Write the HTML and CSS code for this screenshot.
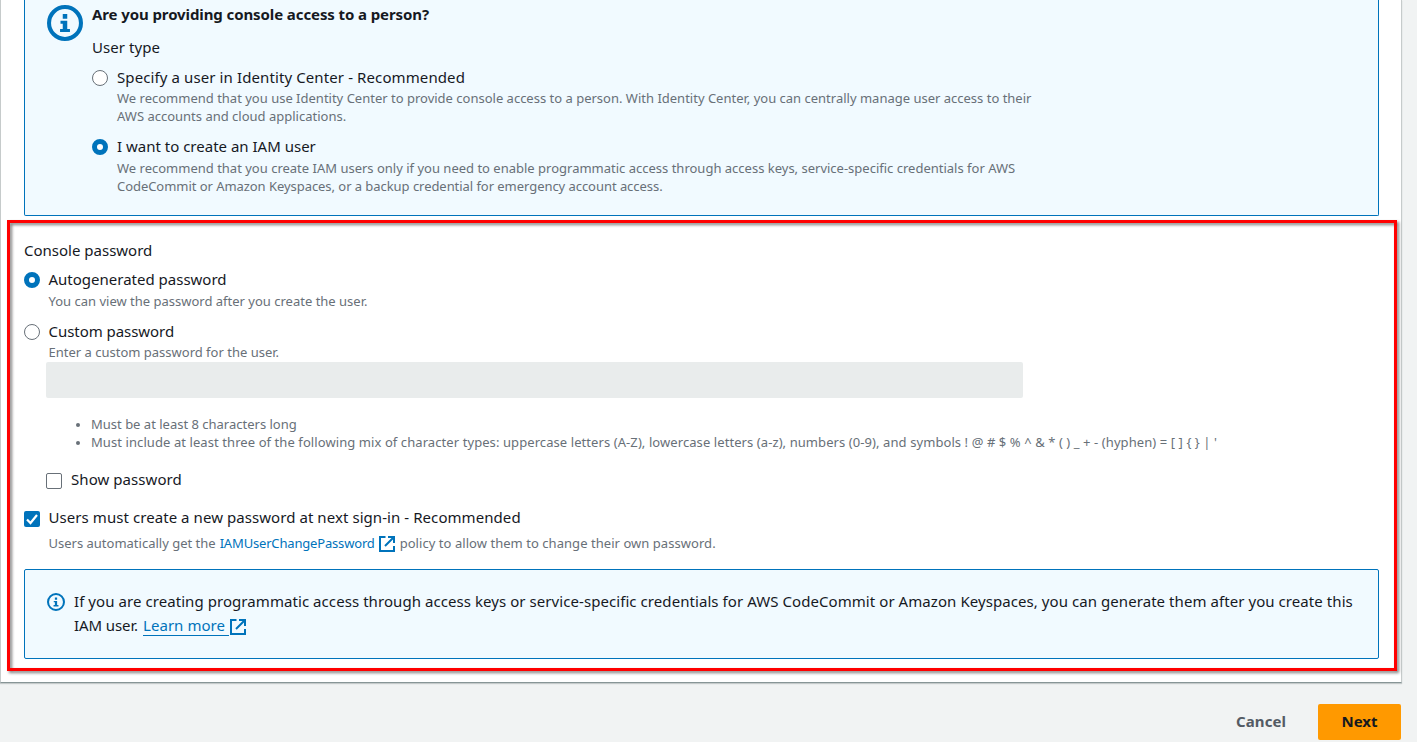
FILE: index.html
```html
<!DOCTYPE html>
<html lang="en">
<head>
<meta charset="utf-8">
<title>Create user</title>
<link rel="stylesheet" href="styles.css">
</head>
<body>
<svg class="defs" aria-hidden="true">
<symbol id="info" viewBox="0 0 16 16"><circle cx="8" cy="8" r="7.100" fill="none" stroke="currentColor" stroke-width="1.800"/><path fill="currentColor" d="M7 4h2v2.100H7zM6 7h3v3.700h1.200V12H5.800v-1.300H7V8.300H6z"/></symbol>
<symbol id="ext" viewBox="0 0 16 16"><path d="M6.500 1H1v14h14v-5M9 1h6v6M15 1 6 10" fill="none" stroke="currentColor" stroke-width="2"/></symbol>
<symbol id="tick" viewBox="0 0 16 16"><path d="M3 8.500 6.500 12 13 4" fill="none" stroke="#fff" stroke-width="2.200"/></symbol>
</svg>
<main class="panel">
<section class="box access">
<svg class="big-info"><use href="#info"/></svg>
<div class="access-body">
<h2 class="title"><span>Are you providing console access to a person?</span></h2>
<div class="label"><span class="loose">User type</span></div>
<div class="option first"><i class="radio"></i><div><div class="label"><span class="looser">Specify a user in Identity Center - Recommended</span></div>
<p class="hint"><span>We recommend that you use Identity Center to provide console access to a person. With Identity Center, you can centrally manage user access to their</span><br><span>AWS accounts and cloud applications.</span></p></div></div>
<div class="option"><i class="radio on"></i><div><div class="label"><span>I want to create an IAM user</span></div>
<p class="hint low"><span>We recommend that you create IAM users only if you need to enable programmatic access through access keys, service-specific credentials for AWS</span><br><span class="tight">CodeCommit or Amazon Keyspaces, or a backup credential for emergency account access.</span></p></div></div>
</div>
</section>
<section class="password">
<div class="label"><span>Console password</span></div>
<div class="option auto"><i class="radio on"></i><div><div class="label"><span>Autogenerated password</span></div><p class="hint low"><span>You can view the password after you create the user.</span></p></div></div>
<div class="option custom"><i class="radio"></i><div><div class="label"><span class="tight">Custom password</span></div><p class="hint"><span>Enter a custom password for the user.</span></p></div></div>
<div class="custom-fields">
<div class="input"></div>
<ul class="rules"><li><span>Must be at least 8 characters long</span></li><li><span>Must include at least three of the following mix of character types: uppercase letters (A-Z), lowercase letters (a-z), numbers (0-9), and </span><span class="symbols">symbols ! @ # $ % ^ &amp; * ( ) _ + - (hyphen) = [ ] { } | '</span></li></ul>
<div class="option"><i class="check"></i><div class="label"><span class="loose">Show password</span></div></div>
</div>
<div class="option reset"><i class="check on"><svg><use href="#tick"/></svg></i><div><div class="label"><span class="loose">Users must create a new password at next sign-in - Recommended</span></div>
<div class="hint policy"><span>Users automatically get the</span><a class="link"><span class="policy-name">IAMUserChangePassword</span><svg class="ext"><use href="#ext"/></svg></a><span class="policy-rest">policy to allow them to change their own password.</span></div></div></div>
</section>
<section class="box note"><svg class="small-info"><use href="#info"/></svg>
<div><div class="note-line"><span class="loose">If you are creating programmatic access through access keys or service-specific credentials for AWS CodeCommit or Amazon Keyspaces, you can generate them after you create this</span></div>
<div class="note-line last"><span class="iam">IAM user.</span><a class="link"><span class="under">Learn more</span><svg class="ext"><use href="#ext"/></svg></a></div></div></section>
</main>
<footer class="actions"><a class="cancel"><span class="loose">Cancel</span></a><button class="next">Next</button></footer>
<div class="highlight"></div>
</body>
</html>
```
FILE: styles.css
```css
*{box-sizing:border-box}
body{margin:0;width:1417px;height:742px;overflow:hidden;background:#f1f3f3;color:#16191f;font:15px/22px "Noto Sans",sans-serif;position:relative}
h2,p,ul{margin:0}
span{white-space:pre}
svg{display:block;flex:none}
.defs{position:absolute;width:0;height:0}
.loose{letter-spacing:.066px}
.looser{letter-spacing:.106px}
.tight{letter-spacing:-.05px}
.symbols{letter-spacing:.09px}
.panel{width:1402px;height:683px;background:#fff;border:1px solid #c6cbcb;border-top:0;border-bottom-color:#879596;padding:0 22px 0 23px;box-shadow:0 1px 1px #c5caca}
.box{border:1px solid #0073bb;background:#f1faff;border-radius:2px;display:flex;color:#16191f}
.access{height:216px;border-top:0;border-radius:0 0 2px 2px;padding:3px 22px 0}
.big-info{width:36px;height:36px;color:#0073bb;margin:2px 9px 0 0}
.title{font-size:15px;font-weight:700;line-height:22px;margin-bottom:11px;letter-spacing:-.099px}
.label{height:22px}
.option{display:flex}
.radio,.check{flex:none;width:16px;height:16px;border:1px solid #687078;background:#fff;border-radius:50%;margin:4px 9px 0 0}
.radio.on{border:5px solid #0073bb}
.check{border-radius:2px}
.check.on{border:0;background:#0073bb}
.check svg{width:16px;height:16px}
.hint{font-size:13px;line-height:18px;color:#687078;margin-top:1px}
.hint.low{margin-top:2px}
.first{margin:8px 0 10px}
.password{padding-top:23px;height:353px}
.password>.option>.radio,.reset>.check{margin-right:8.500px}
.reset>.check{margin-top:5px}
.auto{margin-top:7px}
.custom{margin-top:10px}
.custom-fields{padding-left:22px}
.custom-fields .check{margin-top:5px}
.input{width:977px;height:36px;margin-top:1px;background:#e9ecec;border-radius:2px}
.rules{margin:17px 0 17px;padding-left:45px;font-size:13px;line-height:18px;color:#687078}
.rules li:last-child span{letter-spacing:.081px}
.rules li::marker{font-size:11px}
.reset{margin-top:16px}
.policy{display:flex;margin-top:6px}
.link{display:flex;color:#0073bb}
.policy .link{margin:0 5px 0 4px}
.policy-name{letter-spacing:-.173px}
.policy-rest{letter-spacing:.048px}
.ext{width:16px;height:16px;margin:2px 0 0 4px;color:#0073bb}
.note{height:90px;padding:19px 22px}
.small-info{width:18px;height:18px;color:#0073bb;margin:4px 9px 0 0}
.note-line{line-height:24px;height:24px}
.last{display:flex}
.iam{letter-spacing:-.1px}
.last .link{margin-left:5px}
.under{height:23px;border-bottom:1px solid #0073bb;padding-right:4px;letter-spacing:.044px}
.last .ext{margin:6px 0 0 1px}
.actions{display:flex;justify-content:flex-end;padding:21px 16px 0 0;font-weight:700}
.cancel{padding-top:6px;color:#545b64;margin-right:32px}
.next{width:83px;height:36px;border:0;border-radius:2px;background:#f90;color:#16191f;padding:0 0 2px;font:700 15px/22px "Noto Sans",sans-serif}
.highlight{position:absolute;left:7px;top:220px;width:1390px;height:451px;border:3px solid #f00;filter:drop-shadow(2px 2px 1.500px rgba(0,0,0,.5));pointer-events:none}
```
